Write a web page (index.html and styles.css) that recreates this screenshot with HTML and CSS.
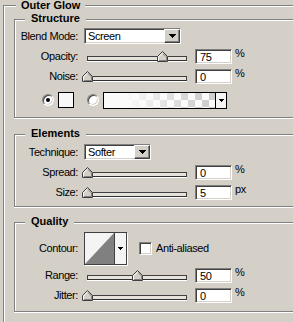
FILE: index.html
```html
<!DOCTYPE html>
<html>
<head>
<meta charset="utf-8">
<link rel="stylesheet" href="styles.css">
</head>
<body>
<div class="page">
  <div class="group outer">
    <span class="title title-outer">Outer Glow</span>

    <div class="group sub structure">
      <span class="title">Structure</span>
      <div class="row">
        <span class="lbl">Blend Mode:</span>
        <div class="select sunken sel-blend"><span class="sel-text">Screen</span><span class="sel-btn"><svg width="7" height="4"><path d="M0 0h7v1H0zM1 1h5v1H1zM2 2h3v1H2zM3 3h1v1H3z"/></svg></span></div>
      </div>
      <div class="row">
        <span class="lbl">Opacity:</span>
        <div class="slider"><div class="track"></div><svg class="thumb" style="left:75px" width="11" height="11"><polygon points="0.5,10.5 0.5,5.5 5.5,0.5 10.5,5.5 10.5,10.5" fill="#d4d0c8" stroke="#404040"/><polyline points="1.5,9.5 1.5,6 5.5,2" fill="none" stroke="#fff"/><polyline points="6,2.5 9.5,6 9.5,9.5 2,9.5" fill="none" stroke="#808080"/></svg></div>
        <div class="field sunken">75</div><span class="unit">%</span>
      </div>
      <div class="row">
        <span class="lbl">Noise:</span>
        <div class="slider"><div class="track"></div><svg class="thumb" style="left:0px" width="11" height="11"><polygon points="0.5,10.5 0.5,5.5 5.5,0.5 10.5,5.5 10.5,10.5" fill="#d4d0c8" stroke="#404040"/><polyline points="1.5,9.5 1.5,6 5.5,2" fill="none" stroke="#fff"/><polyline points="6,2.5 9.5,6 9.5,9.5 2,9.5" fill="none" stroke="#808080"/></svg></div>
        <div class="field sunken">0</div><span class="unit">%</span>
      </div>
      <div class="row swatch-row">
        <span class="radio sunken radio-first checked"></span>
        <span class="swatch"></span>
        <span class="radio sunken radio-second"></span>
        <div class="gradient">
          <span class="grad-preview"></span>
          <span class="grad-arrow"><svg width="5" height="3"><path d="M0 0h5v1H0zM1 1h3v1H1zM2 2h1v1H2z"/></svg></span>
        </div>
      </div>
    </div>

    <div class="group sub elements">
      <span class="title">Elements</span>
      <div class="row">
        <span class="lbl">Technique:</span>
        <div class="select sunken sel-tech"><span class="sel-text">Softer</span><span class="sel-btn"><svg width="7" height="4"><path d="M0 0h7v1H0zM1 1h5v1H1zM2 2h3v1H2zM3 3h1v1H3z"/></svg></span></div>
      </div>
      <div class="row">
        <span class="lbl">Spread:</span>
        <div class="slider"><div class="track"></div><svg class="thumb" style="left:0px" width="11" height="11"><polygon points="0.5,10.5 0.5,5.5 5.5,0.5 10.5,5.5 10.5,10.5" fill="#d4d0c8" stroke="#404040"/><polyline points="1.5,9.5 1.5,6 5.5,2" fill="none" stroke="#fff"/><polyline points="6,2.5 9.5,6 9.5,9.5 2,9.5" fill="none" stroke="#808080"/></svg></div>
        <div class="field sunken">0</div><span class="unit">%</span>
      </div>
      <div class="row">
        <span class="lbl">Size:</span>
        <div class="slider"><div class="track"></div><svg class="thumb" style="left:0px" width="11" height="11"><polygon points="0.5,10.5 0.5,5.5 5.5,0.5 10.5,5.5 10.5,10.5" fill="#d4d0c8" stroke="#404040"/><polyline points="1.5,9.5 1.5,6 5.5,2" fill="none" stroke="#fff"/><polyline points="6,2.5 9.5,6 9.5,9.5 2,9.5" fill="none" stroke="#808080"/></svg></div>
        <div class="field sunken">5</div><span class="unit">px</span>
      </div>
    </div>

    <div class="group sub quality">
      <span class="title">Quality</span>
      <div class="row contour-row">
        <span class="lbl">Contour:</span>
        <div class="contour">
          <span class="contour-preview"><svg width="29" height="31"><polygon points="0,31 29,0 29,31" fill="#808080"/></svg></span>
          <span class="contour-arrow"><svg width="5" height="3"><path d="M0 0h5v1H0zM1 1h3v1H1zM2 2h1v1H2z"/></svg></span>
        </div>
        <span class="checkbox sunken"></span>
        <span class="check-label">Anti-aliased</span>
      </div>
      <div class="row">
        <span class="lbl">Range:</span>
        <div class="slider"><div class="track"></div><svg class="thumb" style="left:50px" width="11" height="11"><polygon points="0.5,10.5 0.5,5.5 5.5,0.5 10.5,5.5 10.5,10.5" fill="#d4d0c8" stroke="#404040"/><polyline points="1.5,9.5 1.5,6 5.5,2" fill="none" stroke="#fff"/><polyline points="6,2.5 9.5,6 9.5,9.5 2,9.5" fill="none" stroke="#808080"/></svg></div>
        <div class="field sunken">50</div><span class="unit">%</span>
      </div>
      <div class="row">
        <span class="lbl">Jitter:</span>
        <div class="slider"><div class="track"></div><svg class="thumb" style="left:0px" width="11" height="11"><polygon points="0.5,10.5 0.5,5.5 5.5,0.5 10.5,5.5 10.5,10.5" fill="#d4d0c8" stroke="#404040"/><polyline points="1.5,9.5 1.5,6 5.5,2" fill="none" stroke="#fff"/><polyline points="6,2.5 9.5,6 9.5,9.5 2,9.5" fill="none" stroke="#808080"/></svg></div>
        <div class="field sunken">0</div><span class="unit">%</span>
      </div>
    </div>
  </div>
</div>
</body>
</html>
```
FILE: styles.css
```css
html, body {
  margin: 0;
  background: #d4d0c8;
  overflow: hidden;
}
body {
  font-family: "Liberation Sans", Arial, sans-serif;
  font-size: 11px;
  line-height: 13px;
  color: #000;
  letter-spacing: -0.4px;
}
.page {
  padding: 5px 0 0 3px;
}
.group {
  position: relative;
  border: 1px solid #808080;
  border-right: none;
  box-shadow: inset 1px 1px 0 #fff, 0 1px 0 #fff;
}
.outer {
  width: 290px;
  height: 317px;
  padding: 13px 0 0 10px;
  box-sizing: border-box;
  border-bottom: none;
  box-shadow: inset 1px 1px 0 #fff;
}
.sub {
  width: 279px;
  box-sizing: border-box;
}
.structure {
  padding: 6px 0 7px 0;
}
.elements {
  margin-top: 16px;
  padding: 7px 0 4px 0;
}
.quality {
  margin-top: 15px;
  padding: 9px 0 6px 0;
}
.title {
  position: absolute;
  top: -8px;
  left: 10px;
  padding: 0 6px;
  background: #d4d0c8;
  font-weight: bold;
  letter-spacing: 0;
}
.title-outer {
  top: -7px;
  left: 12px;
  padding: 0 5px;
}
.row {
  display: flex;
  align-items: center;
  height: 20px;
}
.lbl {
  flex: none;
  width: 63px;
  text-align: right;
}
.sunken {
  box-sizing: border-box;
  border: 1px solid;
  border-color: #808080 #fff #fff #808080;
  box-shadow: inset 1px 1px 0 #404040, inset -1px -1px 0 #d4d0c8;
  background: #fff;
}
.select {
  display: flex;
  align-items: center;
  height: 16px;
  margin-left: 6px;
  padding: 0 0 0 3px;
}
.sel-blend {
  width: 97px;
}
.sel-tech {
  width: 67px;
}
.sel-text {
  flex: 1;
}
.sel-btn {
  box-sizing: border-box;
  width: 16px;
  height: 14px;
  display: flex;
  align-items: center;
  justify-content: center;
  background: #d4d0c8;
  border: 1px solid;
  border-color: #fff #404040 #404040 #fff;
  box-shadow: inset -1px -1px 0 #808080;
}
.sel-btn svg {
  display: block;
}
.slider {
  position: relative;
  flex: none;
  width: 110px;
  height: 20px;
  margin-left: 4px;
}
.track {
  box-sizing: border-box;
  height: 5px;
  margin: 10px 5px 0 5px;
  border: 1px solid;
  border-color: #404040 #404040 #303030 #404040;
  background: #e6e3dc;
  box-shadow: 0 1px 0 #fff;
}
.thumb {
  position: absolute;
  top: 5px;
  display: block;
}
.field {
  flex: none;
  width: 37px;
  height: 15px;
  margin-left: 3px;
  padding: 1px 0 0 4px;
  line-height: 12px;
}
.unit {
  align-self: flex-start;
  margin-top: 1px;
  margin-left: 3px;
}
.swatch-row {
  margin-top: 4px;
}
.radio {
  flex: none;
  position: relative;
  width: 12px;
  height: 12px;
  border-radius: 50%;
}
.radio-first {
  margin-left: 27px;
}
.radio-second {
  margin-left: 13px;
}
.checked::after {
  content: "";
  position: absolute;
  left: 3px;
  top: 3px;
  width: 4px;
  height: 4px;
  border-radius: 50%;
  background: #000;
}
.swatch {
  flex: none;
  box-sizing: border-box;
  width: 16px;
  height: 16px;
  margin-left: 4px;
  border: 1px solid #000;
  background: #f8f8f8;
}
.gradient {
  flex: none;
  box-sizing: border-box;
  display: flex;
  width: 124px;
  height: 17px;
  margin-left: 4px;
  border: 1px solid #000;
  background: #fff;
}
.grad-preview {
  flex: 1;
  background:
    linear-gradient(to right, #fafafa 18%, rgba(250,250,250,0) 88%),
    conic-gradient(#cfcfcf 25%, #fafafa 0 50%, #cfcfcf 0 75%, #fafafa 0) 0 0 / 14px 14px;
}
.grad-arrow {
  width: 10px;
  border-left: 1px solid #000;
  display: flex;
  align-items: center;
  justify-content: center;
  background: #f4f4f4;
}
.grad-arrow svg, .contour-arrow svg {
  display: block;
}
.contour-row {
  height: 33px;
}
.contour {
  flex: none;
  box-sizing: border-box;
  display: flex;
  width: 43px;
  height: 33px;
  margin-left: 6px;
  border: 1px solid #404040;
  background: #f4f4f4;
  box-shadow: 1px 1px 0 #fff;
}
.contour-preview {
  width: 29px;
  display: flex;
  align-items: flex-end;
}
.contour-preview svg {
  display: block;
}
.contour-arrow {
  flex: 1;
  border-left: 1px solid #404040;
  display: flex;
  align-items: center;
  justify-content: center;
}
.checkbox {
  flex: none;
  width: 13px;
  height: 13px;
  margin-left: 12px;
}
.check-label {
  margin-left: 4px;
}
```
